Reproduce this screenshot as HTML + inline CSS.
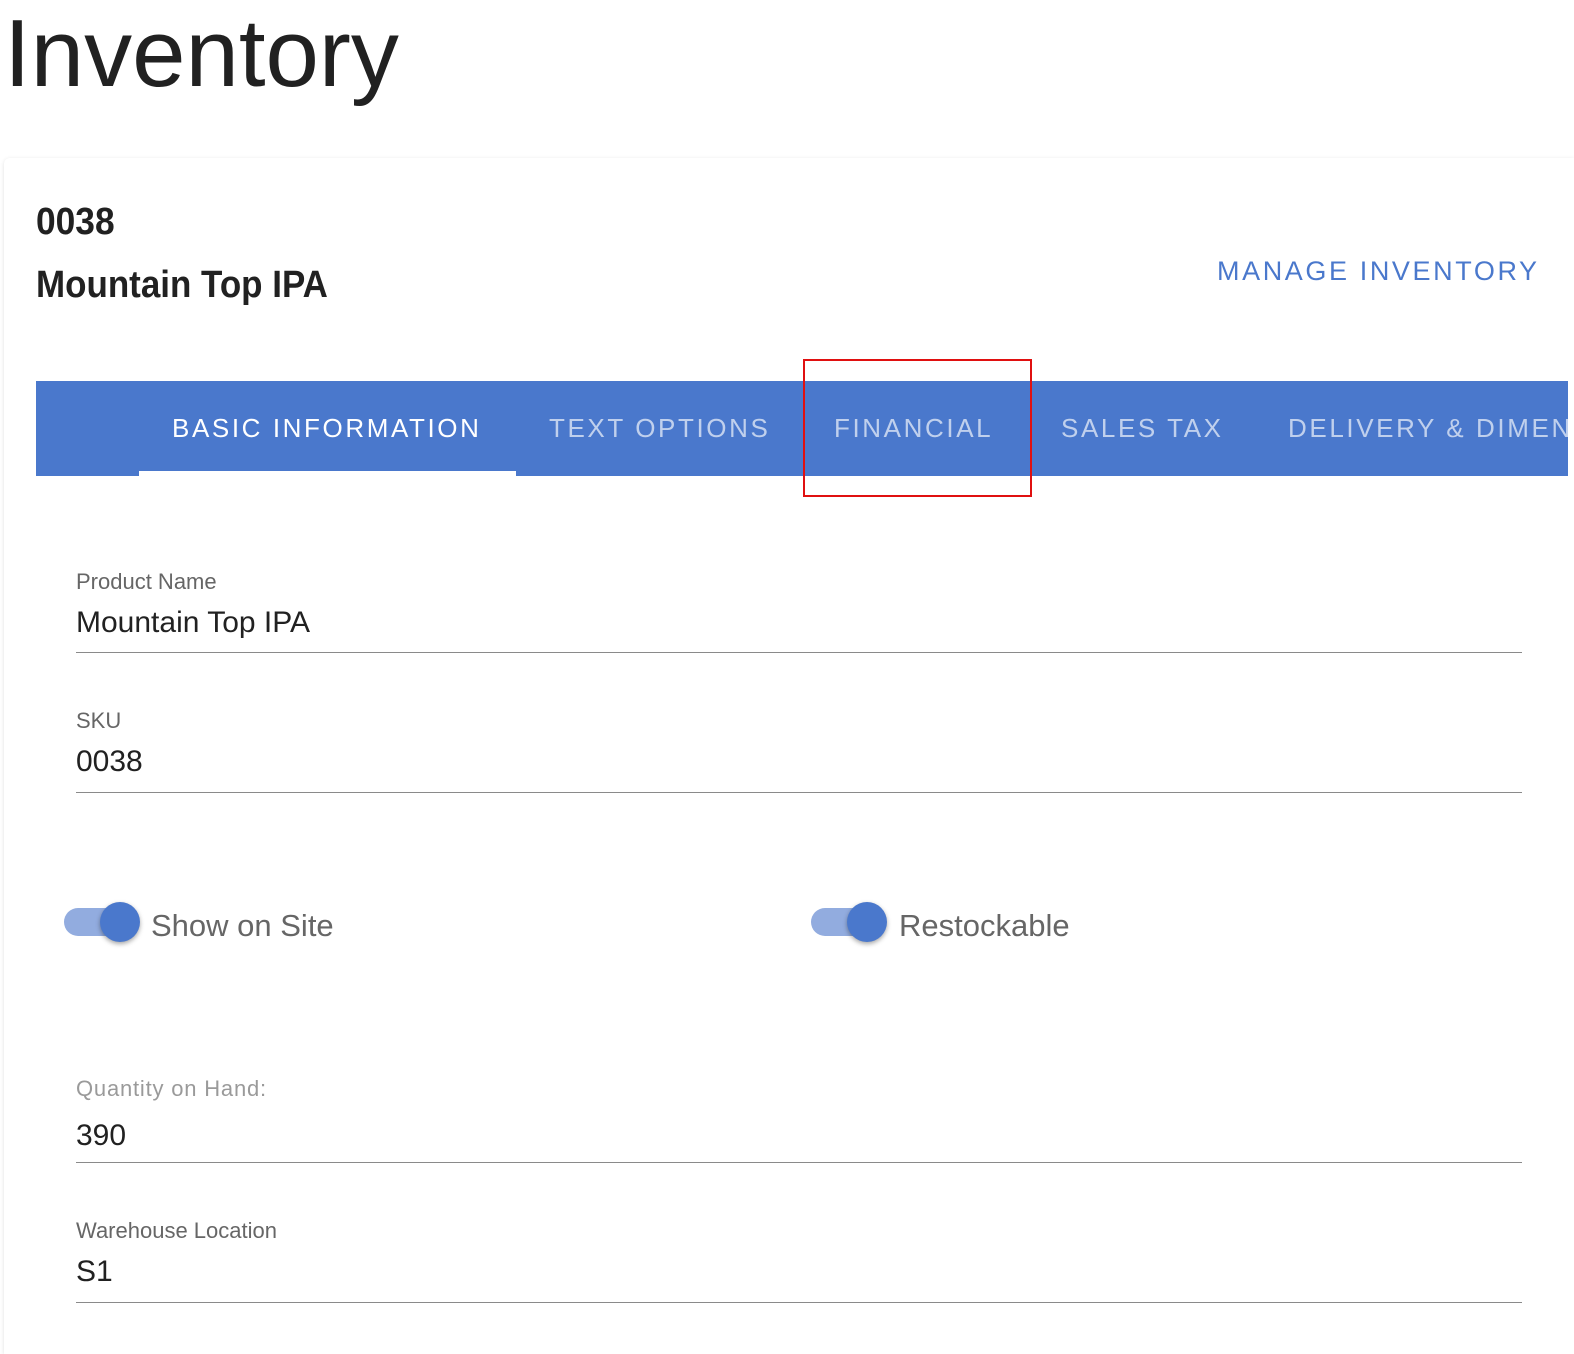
<!DOCTYPE html>
<html><head><meta charset="utf-8"><style>
*{margin:0;padding:0;box-sizing:border-box}
html,body{width:1574px;height:1354px;overflow:hidden}
body{background:#fff;font-family:"Liberation Sans",Arial,sans-serif;position:relative;color:#212121}
.a{position:absolute;white-space:nowrap}
.card{position:absolute;left:4px;top:158px;width:1570px;height:1196px;background:#fff;border-radius:6px 0 0 0;box-shadow:0 1px 4px rgba(0,0,0,.12)}
.tabs{position:absolute;left:36px;top:381px;width:1532px;height:95px;background:#4a78cc;overflow:hidden}
.tab{position:absolute;top:32px;font-size:26px;letter-spacing:2.6px;color:rgba(255,255,255,.65);white-space:nowrap}
.lbl{font-size:22px;color:#666}
.val{font-size:30px;color:#212121}
.line{position:absolute;left:76px;width:1446px;height:1px;background:#8a8a8a}
.track{position:absolute;width:56px;height:28px;border-radius:14px;background:#92acdf}
.thumb{position:absolute;width:40px;height:40px;border-radius:50%;background:#4a78cc;box-shadow:0 2px 5px rgba(0,0,0,.35)}
.tl{font-size:31px;color:#666}
</style></head><body>
<div class="a" style="left:4px;top:-1px;font-size:96px;color:#212121;transform:scaleX(1.0);transform-origin:left">Inventory</div>
<div class="card"></div>
<div class="a" style="left:36px;top:201px;font-size:38px;font-weight:bold;transform:scaleX(0.93);transform-origin:left">0038</div>
<div class="a" style="left:36px;top:264px;font-size:38px;font-weight:bold;transform:scaleX(0.92);transform-origin:left">Mountain Top IPA</div>
<div class="a" style="left:1217px;top:256px;font-size:27px;letter-spacing:2.6px;color:#4a78cc">MANAGE INVENTORY</div>
<div class="tabs">
<div class="tab" style="left:136px;color:#fff">BASIC INFORMATION</div>
<div class="tab" style="left:513px">TEXT OPTIONS</div>
<div class="tab" style="left:798px">FINANCIAL</div>
<div class="tab" style="left:1025px">SALES TAX</div>
<div class="tab" style="left:1252px">DELIVERY &amp; DIMENSIONS</div>
<div style="position:absolute;left:103px;top:90px;width:377px;height:5px;background:#fff"></div>
</div>
<div style="position:absolute;left:803px;top:359px;width:229px;height:138px;border:2px solid #e01010"></div>
<div class="a lbl" style="left:76px;top:569px">Product Name</div>
<div class="a val" style="left:76px;top:606px">Mountain Top IPA</div>
<div class="line" style="top:652px"></div>
<div class="a lbl" style="left:76px;top:708px">SKU</div>
<div class="a val" style="left:76px;top:745px">0038</div>
<div class="line" style="top:792px"></div>
<div class="track" style="left:64px;top:908px"></div>
<div class="thumb" style="left:100px;top:902px"></div>
<div class="a tl" style="left:151px;top:908px">Show on Site</div>
<div class="track" style="left:811px;top:908px"></div>
<div class="thumb" style="left:847px;top:902px"></div>
<div class="a tl" style="left:899px;top:908px">Restockable</div>
<div class="a lbl" style="left:76px;top:1076px;color:#9a9a9a;letter-spacing:.8px">Quantity on Hand:</div>
<div class="a val" style="left:76px;top:1119px">390</div>
<div class="line" style="top:1162px"></div>
<div class="a lbl" style="left:76px;top:1218px">Warehouse Location</div>
<div class="a val" style="left:76px;top:1255px">S1</div>
<div class="line" style="top:1302px"></div>
</body></html>
